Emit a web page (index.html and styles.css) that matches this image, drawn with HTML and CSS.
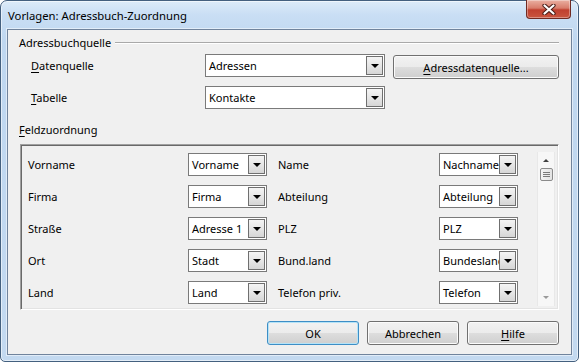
FILE: index.html
```html
<!DOCTYPE html>
<html lang="de">
<head>
    <meta charset="UTF-8">
    <title>Vorlagen: Adressbuch-Zuordnung</title>
    <link rel="stylesheet" href="styles.css">
</head>
<body>
<div class="window">
    <div class="titlebar">
        <span class="title">Vorlagen: Adressbuch-Zuordnung</span>
        <span class="close">
            <svg width="14" height="11" viewBox="0 0 14 11">
                <path d="M2.5 1.5 L11.5 9.5 M11.5 1.5 L2.5 9.5" stroke="#4a1d17" stroke-width="4.2" stroke-linecap="round"/>
                <path d="M2.5 1.5 L11.5 9.5 M11.5 1.5 L2.5 9.5" stroke="#fff" stroke-width="2.2" stroke-linecap="round"/>
            </svg>
        </span>
    </div>

    <div class="client">
        <div class="group-head"><span>Adressbuchquelle</span></div>

        <div class="source">
            <label class="lbl"><u>D</u>atenquelle</label>
            <div class="combo"><span>Adressen</span><i class="arrow"></i></div>
            <button class="btn wide-btn"><u>A</u>dressdatenquelle...</button>

            <label class="lbl"><u>T</u>abelle</label>
            <div class="combo"><span>Kontakte</span><i class="arrow"></i></div>
        </div>

        <div class="group-title"><u>F</u>eldzuordnung</div>

        <div class="fieldbox">
            <div class="fields">
                <span class="flabel">Vorname</span>
                <div class="combo"><span>Vorname</span><i class="arrow"></i></div>
                <span class="flabel right">Name</span>
                <div class="combo"><span>Nachname</span><i class="arrow"></i></div>

                <span class="flabel">Firma</span>
                <div class="combo"><span>Firma</span><i class="arrow"></i></div>
                <span class="flabel right">Abteilung</span>
                <div class="combo"><span>Abteilung</span><i class="arrow"></i></div>

                <span class="flabel">Straße</span>
                <div class="combo"><span>Adresse 1</span><i class="arrow"></i></div>
                <span class="flabel right">PLZ</span>
                <div class="combo"><span>PLZ</span><i class="arrow"></i></div>

                <span class="flabel">Ort</span>
                <div class="combo"><span>Stadt</span><i class="arrow"></i></div>
                <span class="flabel right">Bund.land</span>
                <div class="combo"><span>Bundesland</span><i class="arrow"></i></div>

                <span class="flabel">Land</span>
                <div class="combo"><span>Land</span><i class="arrow"></i></div>
                <span class="flabel right">Telefon priv.</span>
                <div class="combo"><span>Telefon</span><i class="arrow"></i></div>
            </div>

            <div class="scrollbar">
                <i class="sb-up"></i>
                <div class="thumb"><b></b><b></b><b></b></div>
                <i class="sb-down"></i>
            </div>
        </div>

        <div class="buttons">
            <button class="btn default">OK</button>
            <button class="btn">Abbrechen</button>
            <button class="btn"><u>H</u>ilfe</button>
        </div>
    </div>
</div>
</body>
</html>
```

FILE: styles.css
```css
body {
    margin: 0;
    background: #fff;
    font-family: "Noto Sans", "Open Sans", sans-serif;
    font-size: 11px;
    color: #000;
}

u {
    text-decoration: underline;
    text-underline-offset: 2px;
}

/* window frame */
.window {
    box-sizing: border-box;
    width: 579px;
    height: 362px;
    display: flex;
    flex-direction: column;
    padding: 0 6px 6px 6px;
    border: 1px solid #44607f;
    border-radius: 7px 7px 5px 5px;
    background: linear-gradient(180deg, #dcebf9 0, #c9def4 14px, #bfd7f0 40px, #c3d9f0 100%);
    box-shadow: inset 0 0 0 1px rgba(255, 255, 255, 0.55);
}

.titlebar {
    height: 28px;
    margin: 0 -6px;
    padding: 0 7px;
    display: flex;
    align-items: center;
    justify-content: space-between;
}

.title {
    font-size: 11.3px;
    color: #000;
}

.close {
    align-self: flex-start;
    margin-top: -1px;
    width: 45px;
    height: 19px;
    box-sizing: border-box;
    display: flex;
    align-items: center;
    justify-content: center;
    border: 1px solid #702a22;
    border-top: none;
    border-radius: 0 0 4px 4px;
    background: linear-gradient(180deg, #eab0a2 0, #d87c6b 45%, #c0402f 55%, #c9553f 100%);
    box-shadow: inset 0 0 0 1px rgba(255, 255, 255, 0.35);
}

/* client area */
.client {
    flex: 1;
    box-sizing: border-box;
    padding: 4px 12px 0 11px;
    background: #f0f0f0;
    border: 1px solid #70839c;
    box-shadow: 0 0 0 1px rgba(255, 255, 255, 0.5);
}

.group-head {
    height: 16px;
    display: flex;
    align-items: center;
    gap: 4px;
}

.group-head::after {
    content: "";
    flex: 1;
    height: 0;
    border-top: 1px solid #a9a9a9;
    border-bottom: 1px solid #fff;
    margin-top: 1px;
}

.source {
    margin-top: 4px;
    display: grid;
    grid-template-columns: 186px 180px 1fr;
    grid-template-rows: 23px 23px;
    row-gap: 9px;
    align-items: center;
}

.lbl {
    padding-left: 12px;
}

.group-title {
    margin-top: 13px;
    height: 16px;
    line-height: 16px;
}

/* combo boxes */
.combo {
    box-sizing: border-box;
    height: 23px;
    display: flex;
    align-items: center;
    position: relative;
    background: #fff;
    border: 1px solid #7a7a7a;
    overflow: hidden;
}

.combo span {
    flex: 1;
    padding-left: 3px;
    white-space: nowrap;
    overflow: hidden;
}

.arrow {
    position: absolute;
    right: 1px;
    top: 1px;
    box-sizing: border-box;
    width: 17px;
    height: 19px;
    border: 1px solid #6f6f6f;
    background: linear-gradient(180deg, #f4f4f4 0, #e6e6e6 50%, #d6d6d6 100%);
    display: flex;
    align-items: center;
    justify-content: center;
}

.arrow::after {
    content: "";
    border-left: 4px solid transparent;
    border-right: 4px solid transparent;
    border-top: 4px solid #000;
}

/* push buttons */
.btn {
    box-sizing: border-box;
    height: 24px;
    padding: 0;
    font: inherit;
    color: #000;
    border: 1px solid #707070;
    border-radius: 3px;
    background: linear-gradient(180deg, #f2f2f2 0, #ebebeb 50%, #dddddd 51%, #cfcfcf 100%);
    box-shadow: inset 0 0 0 1px #fbfbfb;
}

.wide-btn {
    align-self: start;
    margin: 1px 0 0 8px;
}

.btn.default {
    border-color: #3d8ec6;
    box-shadow: inset 0 0 0 1px #b5e3f7;
}

/* field mapping box */
.fieldbox {
    margin: 6px 0 0 1px;
    height: 166px;
    box-sizing: border-box;
    display: flex;
    border: 1px solid;
    border-color: #a0a0a0 #fff #fff #a0a0a0;
    box-shadow: inset 1px 1px 0 #696969, inset -1px -1px 0 #e3e3e3;
}

.fields {
    padding: 8px 0 0 7px;
    display: grid;
    grid-template-columns: 160px 79px 172px 79px;
    grid-auto-rows: 23px;
    row-gap: 9px;
    align-items: center;
}

.flabel.right {
    padding-left: 11px;
}

.scrollbar {
    margin: 7px 3px 3px auto;
    width: 18px;
    box-sizing: border-box;
    position: relative;
    background: #f7f7f7;
    border-left: 1px solid #e8e8e8;
    border-right: 1px solid #e8e8e8;
    display: flex;
    flex-direction: column;
    align-items: center;
}

.sb-up {
    margin-top: 7px;
    border-left: 3px solid transparent;
    border-right: 3px solid transparent;
    border-bottom: 3px solid #404040;
}

.thumb {
    margin-top: 6px;
    box-sizing: border-box;
    width: 13px;
    height: 13px;
    border: 1px solid #8b8b8b;
    border-radius: 2px;
    background: linear-gradient(90deg, #f4f4f4, #e3e3e3);
    display: flex;
    flex-direction: column;
    justify-content: center;
    align-items: center;
    gap: 1px;
}

.thumb b {
    display: block;
    width: 7px;
    height: 1px;
    background: #7a7a7a;
}

.sb-down {
    margin-top: auto;
    margin-bottom: 7px;
    border-left: 3px solid transparent;
    border-right: 3px solid transparent;
    border-top: 3px solid #9a9a9a;
}

.buttons {
    margin-top: 11px;
    display: flex;
    justify-content: flex-end;
    gap: 8px;
}

.buttons .btn {
    width: 92px;
}
```
